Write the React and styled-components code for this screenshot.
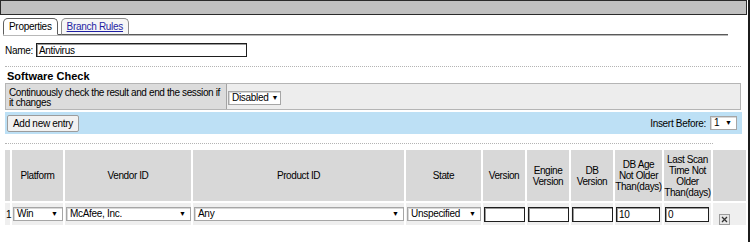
import React from 'react';
import styled, { createGlobalStyle } from 'styled-components';

const GlobalStyle = createGlobalStyle`
  html, body {
    margin: 0;
    padding: 0;
    background: #fff;
  }
  body {
    font-family: 'Liberation Sans', Tahoma, Arial, sans-serif;
    font-size: 10px;
    letter-spacing: -0.3px;
    color: #000;
  }
  * { box-sizing: border-box; }
`

const Frame = styled.div`
  width: 750px;
  height: 242px;
  border-right: 2px solid #1c1c1c;
  overflow: hidden;
`

const TitleBar = styled.div`
  height: 15px;
  margin-right: 1px;
  background: #c0c0c0;
  border: 1px solid #2a2a2a;
`

const Body = styled.div`
  padding: 0 6px 0 5px;
`

const TabStrip = styled.div`
  display: flex;
  align-items: flex-end;
  gap: 3px;
  margin: 2px 14px 0 -2px;
  height: 18px;
  border-bottom: 1px solid #5a5a5a;
  box-shadow: 0 1px 0 #b8b8b8;
`

const Tab = styled.div`
  height: 17px;
  padding: 0 5px;
  display: flex;
  align-items: center;
  margin-bottom: -1px;
  border: 1px solid ${p => p.active ? '#5e5e5e' : '#8c8c8c'};
  border-bottom: ${p => p.active ? '1px solid #fff' : '1px solid #5a5a5a'};
  border-radius: 5px 5px 0 0;
  background: ${p => p.active ? '#fff' : '#f6f6f6'};
  color: ${p => p.active ? '#000' : '#1f1fa3'};
  text-decoration: ${p => p.active ? 'none' : 'underline'};
`

const NameRow = styled.div`
  display: flex;
  align-items: center;
  gap: 3px;
  margin-top: 8px;
  height: 14px;
`

const TextField = styled.div`
  width: ${p => p.width}px;
  height: ${p => p.height || 15}px;
  border: 1px solid #1e1e1e;
  box-shadow: inset 1px 1px 0 #9a9a9a;
  background: #fff;
  padding: 1px 2px 0;
  line-height: 12px;
`

const Dotted = styled.div`
  border-top: 1px dotted #b4b4b4;
  margin-top: ${p => p.top}px;
  width: ${p => p.width}px;
`

const SectionTitle = styled.div`
  font-weight: bold;
  font-size: 11px;
  letter-spacing: 0;
  margin: 3px 0 0 2px;
  height: 13px;
  line-height: 12px;
`

const SettingRow = styled.div`
  display: flex;
  width: 736px;
  height: 27px;
  border: 1px solid #b5b5b5;
`

const SettingLabel = styled.div`
  width: 221px;
  background: #dcdcdc;
  border-right: 1px solid #a4a4a4;
  padding: 4px 0 0 3px;
  line-height: 10px;
  letter-spacing: -0.38px;
`

const SettingValue = styled.div`
  flex: 1;
  background: #ededed;
  display: flex;
  align-items: center;
  padding: 2px 0 0 1px;
`

const Select = styled.div`
  width: ${p => p.width}px;
  height: 14px;
  display: flex;
  align-items: center;
  justify-content: space-between;
  padding: 0 4px 0 3px;
  background: #fff;
  border: 1px solid #a6a6a6;
  box-shadow: inset 1px 1px 0 #d8d8d8;
  line-height: 12px;
  white-space: nowrap;
`

const Arrow = styled.span`
  font-size: 7px;
  letter-spacing: 0;
  margin-left: 3px;
`

const ActionBar = styled.div`
  display: flex;
  align-items: center;
  justify-content: space-between;
  width: 737px;
  height: 22px;
  margin-top: 2px;
  padding: 0 5px 0 2px;
  background: #bde0f5;
`

const Button = styled.div`
  height: 17px;
  padding: 0 5px;
  display: flex;
  align-items: center;
  background: #f1f1f1;
  border: 1px solid #9c9c9c;
  border-radius: 2px;
`

const InsertGroup = styled.div`
  display: flex;
  align-items: center;
  gap: 4px;
`

const Grid = styled.table`
  width: 745px;
  border-collapse: separate;
  border-spacing: 2px;
  margin: 4px 0 0 -2px;
  table-layout: fixed;
`

const HeadCell = styled.th`
  width: ${p => p.w}px;
  height: 51px;
  padding: 0;
  background: #d8d8d8;
  font-weight: normal;
  text-align: center;
  vertical-align: middle;
  line-height: 11px;
  letter-spacing: -0.4px;
`

const Cell = styled.td`
  height: 22px;
  padding: 0 0 0 ${p => p.pad || 1}px;
  background: #efefef;
  vertical-align: middle;
`

const DeleteCell = styled(Cell)`
  vertical-align: bottom;
  padding: 0 0 0 6px;
  line-height: 0;
`

const DeleteIcon = () => (
  <svg width="11" height="11" viewBox="0 0 11 11">
    <rect x="0.5" y="0.5" width="10" height="10" fill="#e6e6e6" stroke="#9a9a9a" />
    <path d="M3 3 L8 8 M8 3 L3 8" stroke="#333" strokeWidth="1.3" />
  </svg>
)

const columns = [
  { label: '', w: 5 },
  { label: 'Platform', w: 51 },
  { label: 'Vendor ID', w: 126 },
  { label: 'Product ID', w: 211 },
  { label: 'State', w: 75 },
  { label: 'Version', w: 42 },
  { label: 'Engine Version', w: 42 },
  { label: 'DB Version', w: 42 },
  { label: 'DB Age Not Older Than(days)', w: 47 },
  { label: 'Last Scan Time Not Older Than(days)', w: 47 },
  { label: '', w: 33 },
]

export default function App() {
  return (
    <Frame>
      <GlobalStyle />
      <TitleBar />
      <Body>
        <TabStrip>
          <Tab active>Properties</Tab>
          <Tab>Branch Rules</Tab>
        </TabStrip>
        <NameRow>
          <span>Name:</span>
          <TextField width={211} height={14}>Antivirus</TextField>
        </NameRow>
        <Dotted top={9} width={736} />
        <SectionTitle>Software Check</SectionTitle>
        <SettingRow>
          <SettingLabel>Continuously check the result and end the session if it changes</SettingLabel>
          <SettingValue>
            <Select width={53}>Disabled<Arrow>▼</Arrow></Select>
          </SettingValue>
        </SettingRow>
        <ActionBar>
          <Button>Add new entry</Button>
          <InsertGroup>
            <span>Insert Before:</span>
            <Select width={27}>1<Arrow>▼</Arrow></Select>
          </InsertGroup>
        </ActionBar>
        <Dotted top={9} width={708} />
        <Grid>
          <thead>
            <tr>
              {columns.map((c, i) => <HeadCell key={i} w={c.w}>{c.label}</HeadCell>)}
            </tr>
          </thead>
          <tbody>
            <tr>
              <Cell pad={0}>1</Cell>
              <Cell><Select width={50}>Win<Arrow>▼</Arrow></Select></Cell>
              <Cell><Select width={125}>McAfee, Inc.<Arrow>▼</Arrow></Select></Cell>
              <Cell><Select width={210}>Any<Arrow>▼</Arrow></Select></Cell>
              <Cell><Select width={74}>Unspecified<Arrow>▼</Arrow></Select></Cell>
              <Cell><TextField width={41} /></Cell>
              <Cell><TextField width={41} /></Cell>
              <Cell><TextField width={41} /></Cell>
              <Cell><TextField width={44}>10</TextField></Cell>
              <Cell><TextField width={44}>0</TextField></Cell>
              <DeleteCell><DeleteIcon /></DeleteCell>
            </tr>
          </tbody>
        </Grid>
      </Body>
    </Frame>
  );
}
